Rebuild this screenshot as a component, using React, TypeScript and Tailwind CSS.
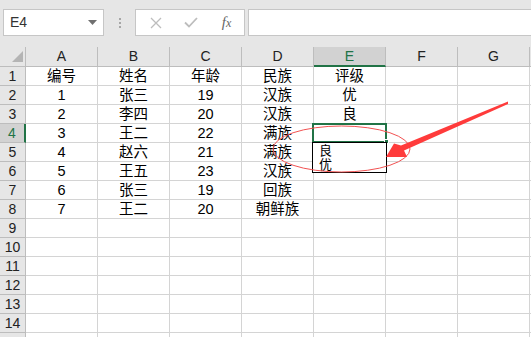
import React from "react";

const cols = ["A", "B", "C", "D", "E", "F", "G"];
const data: string[][] = [
  ["编号", "姓名", "年龄", "民族", "评级"],
  ["1", "张三", "19", "汉族", "优"],
  ["2", "李四", "20", "汉族", "良"],
  ["3", "王二", "22", "满族", ""],
  ["4", "赵六", "21", "满族", ""],
  ["5", "王五", "23", "汉族", ""],
  ["6", "张三", "19", "回族", ""],
  ["7", "王二", "20", "朝鲜族", ""],
];

export default function App() {
  const rows = Array.from({ length: 15 }, (_, i) => i + 1);
  return (
    <div className="relative w-[531px] h-[337px] overflow-hidden bg-white font-['Liberation_Sans','Noto_Sans_CJK_SC',sans-serif] text-[#000]">
      {/* Toolbar */}
      <div className="flex h-[47px] items-start bg-[#e6e6e6] pl-[3px] pt-[9px]">
        <div className="flex h-[27px] w-[101px] items-center justify-between border border-[#c6c6c6] bg-white pl-[6px] pr-[6px]">
          <span className="text-[14px] text-[#333]">E4</span>
          <svg width="9" height="5" viewBox="0 0 9 5">
            <polygon points="0,0 9,0 4.5,5" fill="#707070" />
          </svg>
        </div>
        <div className="flex w-[31px] flex-col items-center gap-[2px] pt-[9px]">
          <div className="h-[2px] w-[2px] bg-[#a6a6a6]" />
          <div className="h-[2px] w-[2px] bg-[#a6a6a6]" />
          <div className="h-[2px] w-[2px] bg-[#a6a6a6]" />
        </div>
        <div className="flex h-[27px] w-[110px] items-center border border-[#c6c6c6] bg-white">
          <div className="flex w-[37px] justify-center pl-[2px]">
            <svg width="12" height="12" viewBox="0 0 12 12">
              <path d="M1 1 L11 11 M11 1 L1 11" stroke="#bdbdbd" strokeWidth="1.3" fill="none" />
            </svg>
          </div>
          <div className="flex w-[36px] justify-center">
            <svg width="14" height="11" viewBox="0 0 14 11">
              <path d="M1 5.5 L5 9.5 L13 1" stroke="#bdbdbd" strokeWidth="1.8" fill="none" />
            </svg>
          </div>
          <div className="flex w-[35px] justify-center">
            <span className="font-['Liberation_Serif',serif] text-[15px] italic text-[#666]">
              f<span className="text-[12px]">x</span>
            </span>
          </div>
        </div>
        <div className="ml-[3px] h-[27px] flex-1 border border-r-0 border-[#c6c6c6] bg-white" />
      </div>

      {/* Grid */}
      <div className="grid grid-cols-[26px_repeat(7,72px)_1fr]">
        {/* header row */}
        <div className="relative h-[20px] border-b border-r border-[#bdbdbd] bg-[#e6e6e6]">
          <svg className="absolute left-0 top-0" width="26" height="20" viewBox="0 0 26 20">
            <polygon points="23,4 23,15 12,15" fill="#b4b4b4" />
          </svg>
        </div>
        {cols.map((c) => (
          <div
            key={c}
            className={
              c === "E"
                ? "flex h-[20px] items-center justify-center border-b-2 border-r border-b-[#217346] border-r-[#bdbdbd] bg-[#d2d2d2] pt-[1px] text-[14px] text-[#217346]"
                : "flex h-[20px] items-center justify-center border-b border-r border-[#bdbdbd] bg-[#e6e6e6] text-[14px] text-[#222]"
            }
          >
            {c}
          </div>
        ))}
        <div className="h-[20px] border-b border-[#bdbdbd] bg-[#e6e6e6]" />

        {rows.map((r) => (
          <React.Fragment key={r}>
            <div
              className={
                r === 4
                  ? "flex h-[19px] items-center justify-center border-b border-r-2 border-b-[#bdbdbd] border-r-[#217346] bg-[#d2d2d2] text-[14px] text-[#217346]"
                  : "flex h-[19px] items-center justify-center border-b border-r border-[#bdbdbd] bg-[#e6e6e6] text-[14px] text-[#222]"
              }
            >
              {r <= 14 ? r : ""}
            </div>
            {cols.map((c, ci) => (
              <div
                key={c}
                className="flex h-[19px] items-center justify-center whitespace-nowrap border-b border-r border-[#d4d4d4] text-[14.5px] leading-none"
              >
                {data[r - 1]?.[ci] ?? ""}
              </div>
            ))}
            <div className="h-[19px] border-b border-[#d4d4d4]" />
          </React.Fragment>
        ))}
      </div>

      {/* Selected cell E4 */}
      <div className="absolute left-[312px] top-[123px] h-[20px] w-[75px] border-2 border-[#217346]" />
      <div className="absolute left-[384px] top-[139px] h-[5px] w-[5px] border border-white bg-[#217346]" />

      {/* Data validation dropdown */}
      <div className="absolute left-[312px] top-[142px] flex h-[31px] w-[75px] flex-col border border-black bg-white pl-[6px] pt-[1px] text-[13px] leading-[14px]">
        <span>良</span>
        <span>优</span>
      </div>

      {/* Annotation */}
      <svg className="pointer-events-none absolute left-0 top-0" width="531" height="337" viewBox="0 0 531 337">
        <ellipse cx="341.5" cy="149" rx="68.5" ry="23" fill="none" stroke="#f25252" strokeWidth="1" />
        <polygon
          points="508,101.5 401,145.5 394,143.5 386,157 407,157 404,150.5 508,104"
          fill="#ff3b3b"
        />
      </svg>
    </div>
  );
}
